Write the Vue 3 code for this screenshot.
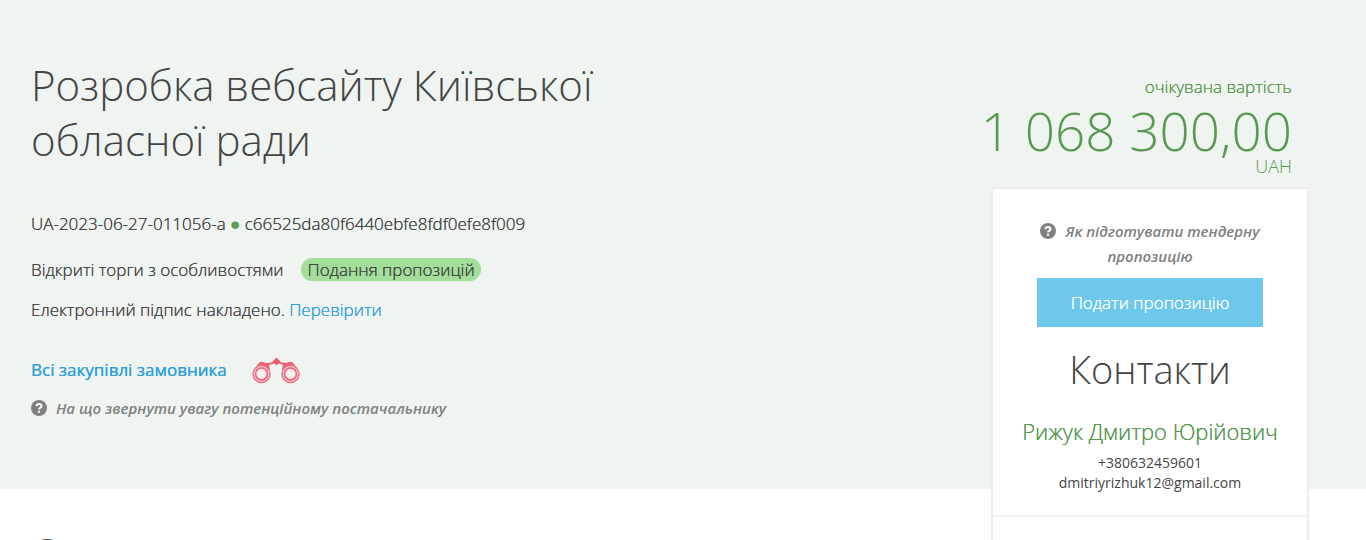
<script setup>
const tender = {
  title: 'Розробка вебсайту Київської обласної ради',
  number: 'UA-2023-06-27-011056-a',
  hash: 'c66525da80f6440ebfe8fdf0efe8f009',
  procedure: 'Відкриті торги з особливостями',
  status: 'Подання пропозицій',
  amount: '1 068 300,00',
  currency: 'UAH'
}
const contact = {
  name: 'Рижук Дмитро Юрійович',
  phone: '+380632459601',
  email: 'dmitriyrizhuk12@gmail.com'
}
</script>

<template>
  <div class="page">
    <div class="band"></div>

    <main class="summary">
      <h1 class="title">{{ tender.title }}</h1>
      <p class="ids firm">{{ tender.number }} <span class="dot">●</span> {{ tender.hash }}</p>
      <p class="line firm">{{ tender.procedure }}<span class="status">{{ tender.status }}</span></p>
      <p class="line firm">Електронний підпис накладено. <a href="#sign">Перевірити</a></p>
      <p class="buyer firm">
        <a href="#buyer">Всі закупівлі замовника</a>
        <svg class="binoculars" viewBox="0 0 48 26" aria-hidden="true">
          <path d="M1.500 13 6 6q2-3 5-2l6 2 1 7zM46.500 13 42 6q-2-3-5-2l-6 2-1 7z" fill="#f0647c" />
          <path d="M14 6Q20 6 23 3.500h3q3 2.500 8 2.500" fill="none" stroke="#ee5870" stroke-width="2" />
          <path d="M24.500 1 27 3.500 24.500 6 22 3.500z" fill="#ee5870" stroke="#ee5870" stroke-width="2" stroke-linejoin="round" />
          <g fill="#f6f1f1" stroke="#ee6d83">
            <circle cx="9.500" cy="16" r="8.500" stroke-width="1.500" />
            <circle cx="9.500" cy="16" r="6" stroke-width="2" />
            <circle cx="38.500" cy="16" r="8.500" stroke-width="1.500" />
            <circle cx="38.500" cy="16" r="6" stroke-width="2" />
          </g>
        </svg>
      </p>
      <a class="hint" href="#supplier">
        <svg class="question" viewBox="0 0 16 16" aria-hidden="true">
          <circle cx="8" cy="8" r="8" fill="#808080" />
          <path d="M5.400 6.200Q5.700 3.900 8 3.900q2.500 0 2.500 2.100 0 1.300-1.300 1.900Q8 8.500 8 9.600" fill="none" stroke="#f6f8f7" stroke-width="2" />
          <rect x="7" y="10.800" width="2" height="2" fill="#f6f8f7" />
        </svg>
        <span>На що звернути увагу потенційному постачальнику</span>
      </a>
    </main>

    <section class="details">
      <h2 class="title">О</h2>
    </section>

    <aside class="side">
      <div class="price">
        <div class="firm">очікувана вартість</div>
        <div class="amount">{{ tender.amount }}</div>
        <div class="currency">{{ tender.currency }}</div>
      </div>
      <div class="card">
        <div class="card-block">
          <a class="hint prepare" href="#prepare">
            <svg class="question" viewBox="0 0 16 16" aria-hidden="true">
              <circle cx="8" cy="8" r="8" fill="#808080" />
              <path d="M5.400 6.200Q5.700 3.900 8 3.900q2.500 0 2.500 2.100 0 1.300-1.300 1.900Q8 8.500 8 9.600" fill="none" stroke="#fff" stroke-width="2" />
              <rect x="7" y="10.800" width="2" height="2" fill="#fff" />
            </svg>
            <span>Як підготувати тендерну пропозицію</span>
          </a>
          <button class="submit firm" type="button">Подати пропозицію</button>
          <h2 class="contacts">Контакти</h2>
          <div class="person firm">{{ contact.name }}</div>
          <div class="reach">{{ contact.phone }}<br>{{ contact.email }}</div>
        </div>
        <div class="card-rest"></div>
      </div>
    </aside>
  </div>
</template>

<style>
body {
  margin: 0;
  background: #fff;
}
</style>

<style scoped>
.page {
  display: grid;
  grid-template-columns: minmax(0, 1fr) 318px;
  grid-template-rows: auto 1fr;
  height: 100vh;
  padding-right: 57px;
  overflow: hidden;
  color: #444;
  font: 300 17px/24px "Open Sans", sans-serif;
}
.firm,
.firm a {
  text-shadow: 0 0 0 currentColor;
}
.band {
  grid-column: 1 / -1;
  grid-row: 1;
  margin-right: -57px;
  background: #eff4f1;
}
.summary {
  grid-column: 1;
  grid-row: 1;
  padding: 57px 0 69px 31px;
}
.details {
  grid-column: 1;
  grid-row: 2;
  padding: 36px 0 0 31px;
}
.side {
  grid-column: 2;
  grid-row: 1 / 3;
  height: 0;
  padding-top: 75px;
}
.title {
  max-width: 620px;
  margin: 0;
  font-size: 42px;
  font-weight: 300;
  line-height: 55px;
}
p {
  margin: 0;
}
a {
  color: #2d9fd9;
  text-decoration: none;
}
.ids {
  margin-top: 45px;
}
.dot {
  color: #5a9e50;
}
.line {
  margin-top: 16px;
}
.ids + .line {
  margin-top: 22px;
}
.status {
  margin-left: 18px;
  padding: 0 6px;
  border-radius: 12px;
  background: #a3de9b;
}
.buyer {
  display: flex;
  align-items: center;
  gap: 25px;
  margin-top: 34px;
  font-weight: 400;
}
.binoculars {
  width: 48px;
  height: 26px;
  margin-top: 2px;
}
.hint {
  display: flex;
  align-items: center;
  gap: 9px;
  margin-top: 12px;
  color: #808080;
  font-size: 15px;
  font-style: italic;
  font-weight: 600;
}
.question {
  width: 16px;
  height: 16px;
}
.price {
  display: flex;
  flex-direction: column;
  align-items: flex-end;
  padding-right: 17px;
  color: #57994f;
}
.amount {
  font-size: 53px;
  font-weight: 300;
  line-height: 64px;
  white-space: nowrap;
}
.currency {
  margin-top: -9px;
  font-size: 18px;
  font-weight: 300;
}
.card {
  margin-top: 9px;
  border: 2px solid #ececec;
  background: #fff;
  text-align: center;
}
.card-block {
  padding: 30px 20px 22px;
  border-bottom: 2px solid #f2f2f2;
}
.card-rest {
  height: 80px;
}
.prepare {
  display: block;
  margin: 0 20px;
  line-height: 25px;
}
.prepare .question {
  margin-right: 9px;
  vertical-align: -2px;
}
.submit {
  display: block;
  width: 226px;
  height: 49px;
  margin: 9px auto 0;
  border: 0;
  background: #6ec8ec;
  color: #fff;
  font: 300 17px/24px "Open Sans", sans-serif;
}
.contacts {
  margin: 15px 0 0;
  font-size: 38px;
  font-weight: 300;
  line-height: 54px;
}
.person {
  margin-top: 20px;
  color: #57994f;
  font-size: 22px;
  line-height: 30px;
  white-space: nowrap;
}
.reach {
  margin-top: 7px;
  font-size: 14px;
  font-weight: 400;
  line-height: 20px;
}
</style>
